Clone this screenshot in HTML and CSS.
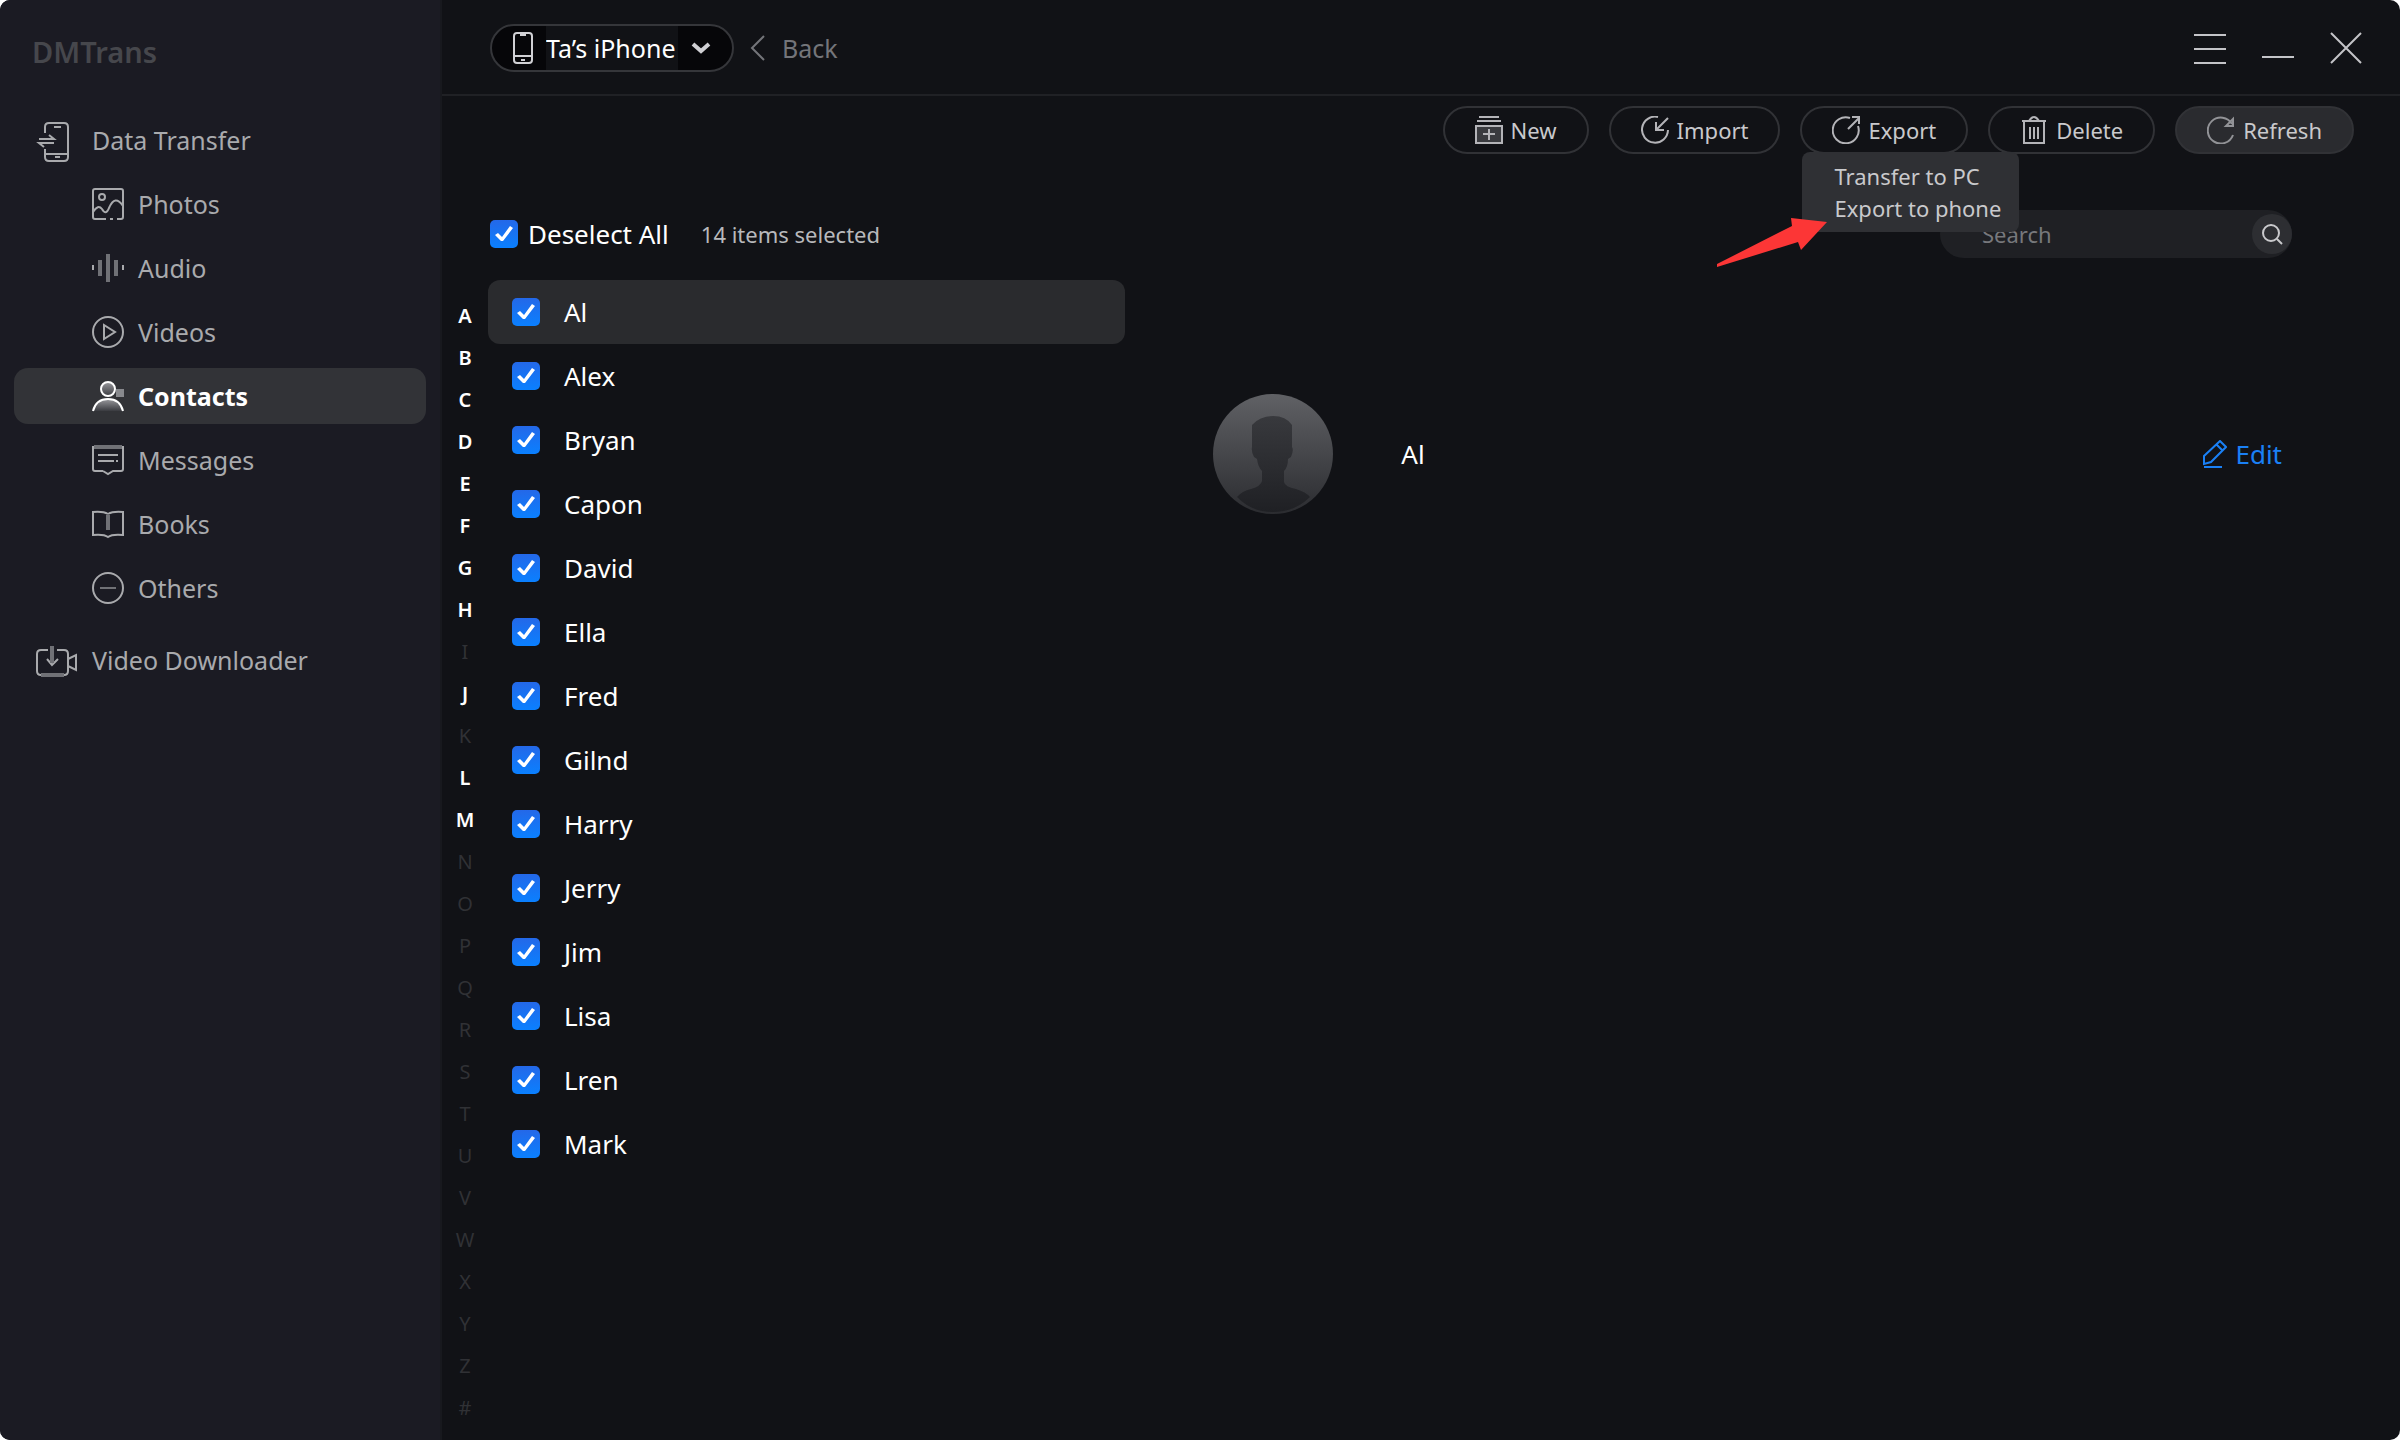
FILE: index.html
```html
<!DOCTYPE html>
<html lang="en">
<head>
  <meta charset="UTF-8">
  <meta name="viewport" content="width=device-width, initial-scale=1.0">
  <title>DMTrans</title>
  <link rel="stylesheet" href="styles.css">
</head>
<body>
  <div class="window">
    <aside class="sidebar">
      <h1 class="brand">DMTrans</h1>
      <nav class="nav">
        <a class="nav-item top" href="#transfer">
          <svg width="42" height="46" viewBox="0 0 42 46"><path d="M9 16v-6q0-4 4-4h15q4 0 4 4v30q0 4-4 4H13q-4 0-4-4v-8M9 37h23M18 10h7M19 40h5M3 22h15l-5-4M18 26H3l5 4"/></svg>
          Data Transfer
        </a>
        <a class="nav-item" href="#photos">
          <svg width="32" height="32" viewBox="0 0 32 32"><path d="M14 31H3q-2 0-2-2V3q0-2 2-2h26q2 0 2 2v26q0 2-2 2h-4M18 31h3M1 24q5-8 9-3 4 7 7-1 6-14 14-2"/><circle cx="10" cy="9" r="3"/></svg>
          Photos
        </a>
        <a class="nav-item" href="#audio">
          <svg width="32" height="32" viewBox="0 0 32 32"><path d="M1 13v5M31 13v5"/><path class="soft" d="M8 8v16M16 2v28M24 8v16"/></svg>
          Audio
        </a>
        <a class="nav-item" href="#videos">
          <svg width="32" height="32" viewBox="0 0 32 32"><circle cx="16" cy="16" r="15"/><path d="M12 9v14l11-7z"/></svg>
          Videos
        </a>
        <a class="nav-item active" href="#contacts">
          <svg width="32" height="32" viewBox="0 0 32 32">
            <defs><linearGradient id="fade" x1="0" y1="0" x2="0" y2="1"><stop offset="0" stop-color="#99999d"/><stop offset="1" stop-color="#3a3b40"/></linearGradient></defs>
            <path class="tag" d="M24 9h8v8h-8z"/>
            <path fill="url(#fade)" stroke="none" d="M1 31q3-12 15-12t15 12"/>
            <path d="M1 31q3-12 15-12t15 12"/>
            <circle cx="16" cy="9" r="7" fill="url(#fade)"/>
          </svg>
          Contacts
        </a>
        <a class="nav-item" href="#messages">
          <svg width="32" height="32" viewBox="0 0 32 32"><path d="M11 27H3q-2 0-2-2V3h30v22q0 2-2 2h-8l-5 3-5-3M6 11h20M6 17h16M24 17h2"/><path class="soft" d="M2 3h28"/></svg>
          Messages
        </a>
        <a class="nav-item" href="#books">
          <svg width="32" height="32" viewBox="0 0 32 32"><path d="M16 6q-5-3-15-2v23q11-1 15 2 4-3 15-2V4q-10-1-15 2"/><path class="soft" d="M16 7v15"/></svg>
          Books
        </a>
        <a class="nav-item" href="#others">
          <svg width="32" height="32" viewBox="0 0 32 32"><circle cx="16" cy="16" r="15"/><path class="thin" d="M8 16h16"/></svg>
          Others
        </a>
        <a class="nav-item top last" href="#downloader">
          <svg width="42" height="42" viewBox="0 0 42 42"><path d="M12 11H5q-4 0-4 4v17q0 4 4 4h23q4 0 4-4V15q0-4-4-4h-7M11 20l5 6 6-6M32 20l8-4v15l-8-4"/><path class="soft" d="M16 7v17M5 36h23"/></svg>
          Video Downloader
        </a>
      </nav>
    </aside>

    <main class="main">
      <header class="titlebar">
        <label class="device">
          <svg width="22" height="34" viewBox="0 0 22 34"><path d="M5 2h12q3 0 3 3v24q0 3-3 3H5q-3 0-3-3V5q0-3 3-3zM2 25h18M8 4h6M9 29h4"/></svg>
          <select class="device-name" aria-label="Device"><option>Ta’s iPhone</option></select>
          <svg class="chevron" width="22" height="14" viewBox="0 0 22 14"><path d="M3 3l8 7 8-7"/></svg>
        </label>
        <a class="back" href="#back">
          <svg width="16" height="26" viewBox="0 0 16 26"><path d="M14 1L2 13l12 12"/></svg>
          Back
        </a>
        <div class="window-buttons">
          <button type="button" aria-label="Menu"><svg width="32" height="32" viewBox="0 0 32 32"><path d="M0 3h32M0 17h32M0 31h32"/></svg></button>
          <button type="button" aria-label="Minimize"><svg width="32" height="32" viewBox="0 0 32 32"><path d="M0 25h32"/></svg></button>
          <button type="button" aria-label="Close"><svg width="32" height="32" viewBox="0 0 32 32"><path d="M1 1l30 30M31 1L1 31"/></svg></button>
        </div>
      </header>

      <div class="toolbar">
        <button class="tool" type="button">
          <svg width="28" height="28" viewBox="0 0 28 28"><path class="shade" d="M1 10h26v17H1z"/><path d="M4 1h20M2 5h24M14 13v11M8 18h12"/></svg>
          New
        </button>
        <button class="tool" type="button">
          <svg width="28" height="28" viewBox="0 0 28 28"><path d="M17 1A13 13 0 1 0 27 14M27 2L16 13M15 6v8h8"/></svg>
          Import
        </button>
        <div class="export">
          <button class="tool" type="button">
            <svg width="28" height="28" viewBox="0 0 28 28"><path d="M18 2A13 13 0 1 0 26 10M16 13L27 2M20 1h7v7"/></svg>
            Export
          </button>
          <div class="export-menu">
            <button type="button">Transfer to PC</button>
            <button type="button">Export to phone</button>
          </div>
          <svg class="pointer" width="112" height="52" viewBox="0 0 112 52"><path d="M111 6L75 2l1 8L1 48v3l81-25 3 8z"/></svg>
        </div>
        <button class="tool" type="button">
          <svg width="28" height="28" viewBox="0 0 28 28"><path d="M2 5h24M9 5q5-8 10 0M4 5v22h20V5M10 11v12M14 11v12M18 11v12"/></svg>
          Delete
        </button>
        <button class="tool filled" type="button">
          <svg width="28" height="28" viewBox="0 0 28 28"><path d="M25 8A13 13 0 1 0 26 19M26 3v7h-7z"/></svg>
          Refresh
        </button>
      </div>

      <div class="list-head">
        <label class="select-all"><input class="check" type="checkbox" checked>Deselect All</label>
        <span class="count">14 items selected</span>
        <div class="search">
          <input type="text" placeholder="Search" aria-label="Search">
          <button type="button" aria-label="Find"><svg width="22" height="22" viewBox="0 0 22 22"><circle cx="10" cy="10" r="8"/><path d="M16 16l5 5"/></svg></button>
        </div>
      </div>

      <div class="content">
        <ul class="letters">
          <li class="on">A</li>
          <li class="on">B</li>
          <li class="on">C</li>
          <li class="on">D</li>
          <li class="on">E</li>
          <li class="on">F</li>
          <li class="on">G</li>
          <li class="on">H</li>
          <li>I</li>
          <li class="on">J</li>
          <li>K</li>
          <li class="on">L</li>
          <li class="on">M</li>
          <li>N</li>
          <li>O</li>
          <li>P</li>
          <li>Q</li>
          <li>R</li>
          <li>S</li>
          <li>T</li>
          <li>U</li>
          <li>V</li>
          <li>W</li>
          <li>X</li>
          <li>Y</li>
          <li>Z</li>
          <li>#</li>
        </ul>

        <div class="contacts">
          <label class="contact selected"><input class="check" type="checkbox" checked>Al</label>
          <label class="contact"><input class="check" type="checkbox" checked>Alex</label>
          <label class="contact"><input class="check" type="checkbox" checked>Bryan</label>
          <label class="contact"><input class="check" type="checkbox" checked>Capon</label>
          <label class="contact"><input class="check" type="checkbox" checked>David</label>
          <label class="contact"><input class="check" type="checkbox" checked>Ella</label>
          <label class="contact"><input class="check" type="checkbox" checked>Fred</label>
          <label class="contact"><input class="check" type="checkbox" checked>Gilnd</label>
          <label class="contact"><input class="check" type="checkbox" checked>Harry</label>
          <label class="contact"><input class="check" type="checkbox" checked>Jerry</label>
          <label class="contact"><input class="check" type="checkbox" checked>Jim</label>
          <label class="contact"><input class="check" type="checkbox" checked>Lisa</label>
          <label class="contact"><input class="check" type="checkbox" checked>Lren</label>
          <label class="contact"><input class="check" type="checkbox" checked>Mark</label>
        </div>

        <section class="detail">
          <svg class="avatar" width="120" height="120" viewBox="0 0 120 120">
            <defs>
              <linearGradient id="disc" x1="0" y1="0" x2="0" y2="1"><stop offset="0" stop-color="#606165"/><stop offset="1" stop-color="#2b2c30"/></linearGradient>
              <linearGradient id="bust" x1="0" y1="0" x2="0" y2="1"><stop offset="0" stop-color="#38393d"/><stop offset="1" stop-color="#1f2024"/></linearGradient>
            </defs>
            <circle cx="60" cy="60" r="60" fill="url(#disc)"/>
            <path fill="url(#bust)" d="M39 31q8-9 21-9t19 9v22q2 3-1 10l-3 2q0 8-4 12v11q1 5 12 7 10 3 14 8-15 15-37 15t-36-15q5-6 14-8 10-3 11-8V77q-4-4-5-12l-3-2q-3-6-2-10z"/>
          </svg>
          <h2 class="name">Al</h2>
          <button class="edit" type="button">
            <svg width="24" height="28" viewBox="0 0 24 28"><path d="M1 24v-8L17 1l6 6L8 22zM14 5l5 5M1 27h18"/></svg>
            Edit
          </button>
        </section>
      </div>
    </main>
  </div>
</body>
</html>
```

FILE: styles.css
```css
* {
  box-sizing: border-box;
}

body {
  margin: 0;
  background: #fff;
  color: #fff;
  font-family: "Noto Sans", "Open Sans", sans-serif;
  font-size: 25px;
}

button, input, select {
  font: inherit;
  color: inherit;
  background: none;
  border: 0;
  padding: 0;
  margin: 0;
}

a {
  color: inherit;
  text-decoration: none;
}

svg {
  flex: none;
  fill: none;
  stroke: currentColor;
  stroke-width: 2;
}

.window {
  display: flex;
  min-height: 100vh;
  background: #111216;
  border-radius: 10px;
  overflow: hidden;
}

/* sidebar */
.sidebar {
  flex: none;
  width: 442px;
  padding: 0 14px;
  background: #1b1b23;
  border-right: 2px solid #18191e;
}

.brand {
  margin: 0;
  padding: 32px 18px 0;
  height: 112px;
  font-size: 29px;
  line-height: 40px;
  font-weight: 600;
  color: #46474c;
}

.nav {
  display: flex;
  flex-direction: column;
  gap: 8px;
}

.nav-item {
  display: flex;
  align-items: center;
  gap: 14px;
  height: 56px;
  padding-left: 78px;
  border-radius: 14px;
  color: #a9aaad;
}

.nav-item.top {
  padding-left: 22px;
}

.nav-item.last {
  margin-top: 8px;
}

.nav-item.active {
  background: #323337;
  color: #fff;
  font-weight: 700;
}

.soft {
  stroke: #707176;
  stroke-width: 4;
}

.thin {
  stroke: #707176;
}

.tag {
  fill: #88898d;
  stroke: none;
}

/* title bar */
.main {
  flex: 1;
  min-width: 0;
}

.titlebar {
  display: flex;
  align-items: center;
  height: 96px;
  padding: 2px 38px 0 48px;
  border-bottom: 2px solid #202125;
}

.device {
  display: flex;
  align-items: center;
  gap: 12px;
  height: 48px;
  padding: 0 20px;
  background: #060609;
  border: 2px solid #35363a;
  border-radius: 24px;
  color: #d0d0d4;
}

.device-name {
  appearance: none;
  width: 132px;
  height: 44px;
  background: #111216;
  color: #fff;
}

.chevron {
  stroke-width: 4;
}

.back {
  display: flex;
  align-items: center;
  gap: 16px;
  margin-left: 16px;
  color: #74757a;
}

.window-buttons {
  display: flex;
  gap: 36px;
  margin-left: auto;
  color: #c4c4c8;
}

.window-buttons button {
  display: flex;
}

/* toolbar */
.toolbar {
  display: flex;
  justify-content: flex-end;
  gap: 20px;
  padding: 10px 46px 0 0;
  font-size: 22px;
  color: #c9c9cc;
}

.tool {
  display: flex;
  align-items: center;
  gap: 8px;
  height: 48px;
  padding: 0 30px;
  border: 2px solid #313236;
  border-radius: 24px;
}

.tool svg {
  color: #b4b4b8;
}

.tool.filled {
  background: #2a2b2f;
}

.tool.filled svg {
  color: #929397;
}

.shade {
  fill: #3a3b3f;
}

.export {
  position: relative;
}

.export-menu {
  position: absolute;
  z-index: 1;
  top: 46px;
  left: 2px;
  display: flex;
  flex-direction: column;
  padding: 8px 18px 8px 32px;
  background: #2f3034;
  border-radius: 8px;
}

.export-menu button {
  height: 32px;
  line-height: 32px;
  text-align: left;
  white-space: nowrap;
}

.pointer {
  position: absolute;
  z-index: 2;
  top: 110px;
  left: -84px;
  fill: #fc3636;
  stroke: none;
}

/* list head */
.list-head {
  display: flex;
  align-items: center;
  margin-top: 56px;
  padding: 0 108px 22px 48px;
}

.select-all {
  display: flex;
  align-items: center;
  gap: 10px;
  font-size: 26px;
}

.count {
  margin-left: 32px;
  font-size: 22px;
  color: #b8b9bc;
}

.search {
  display: flex;
  align-items: center;
  width: 352px;
  height: 48px;
  margin-left: auto;
  background: #1f2024;
  border-radius: 24px;
  font-size: 22px;
}

.search input {
  flex: 1;
  min-width: 0;
  padding-left: 42px;
  outline: 0;
}

.search input::placeholder {
  color: #77787c;
}

.search button {
  display: grid;
  place-items: center;
  width: 40px;
  height: 40px;
  border-radius: 50%;
  background: #2d2e32;
  color: #c9c9cc;
}

.check {
  appearance: none;
  flex: none;
  width: 28px;
  height: 28px;
  border-radius: 5px;
  border: 1px solid #77787c;
}

.check:checked {
  border: 0;
  background: linear-gradient(#2468e8, #0a80ff);
}

.check:checked::before {
  content: "";
  display: block;
  height: 28px;
  background: #fff;
  clip-path: polygon(5px 15px, 8px 13px, 12px 17px, 20px 6px, 23px 8px, 13px 21px, 11px 21px);
}

/* contacts */
.content {
  display: grid;
  grid-template-columns: 46px 1fr 2fr;
}

.letters {
  list-style: none;
  margin: 0;
  padding: 15px 0 0;
  font-size: 20px;
  line-height: 42px;
  text-align: center;
  color: #303135;
}

.letters .on {
  color: #fff;
  font-weight: 600;
}

.contact {
  display: flex;
  align-items: center;
  gap: 24px;
  height: 64px;
  padding-left: 24px;
  border-radius: 12px;
  font-size: 26px;
}

.contact.selected {
  background: #2a2b2e;
}

.detail {
  display: flex;
  align-items: center;
  align-self: start;
  padding: 114px 118px 0 88px;
  font-size: 26px;
}

.name {
  margin: 0 0 0 68px;
  font-size: 26px;
  font-weight: 400;
}

.avatar {
  stroke: none;
}

.edit {
  display: flex;
  align-items: center;
  gap: 8px;
  margin-left: auto;
  color: #1a80f5;
}
```
